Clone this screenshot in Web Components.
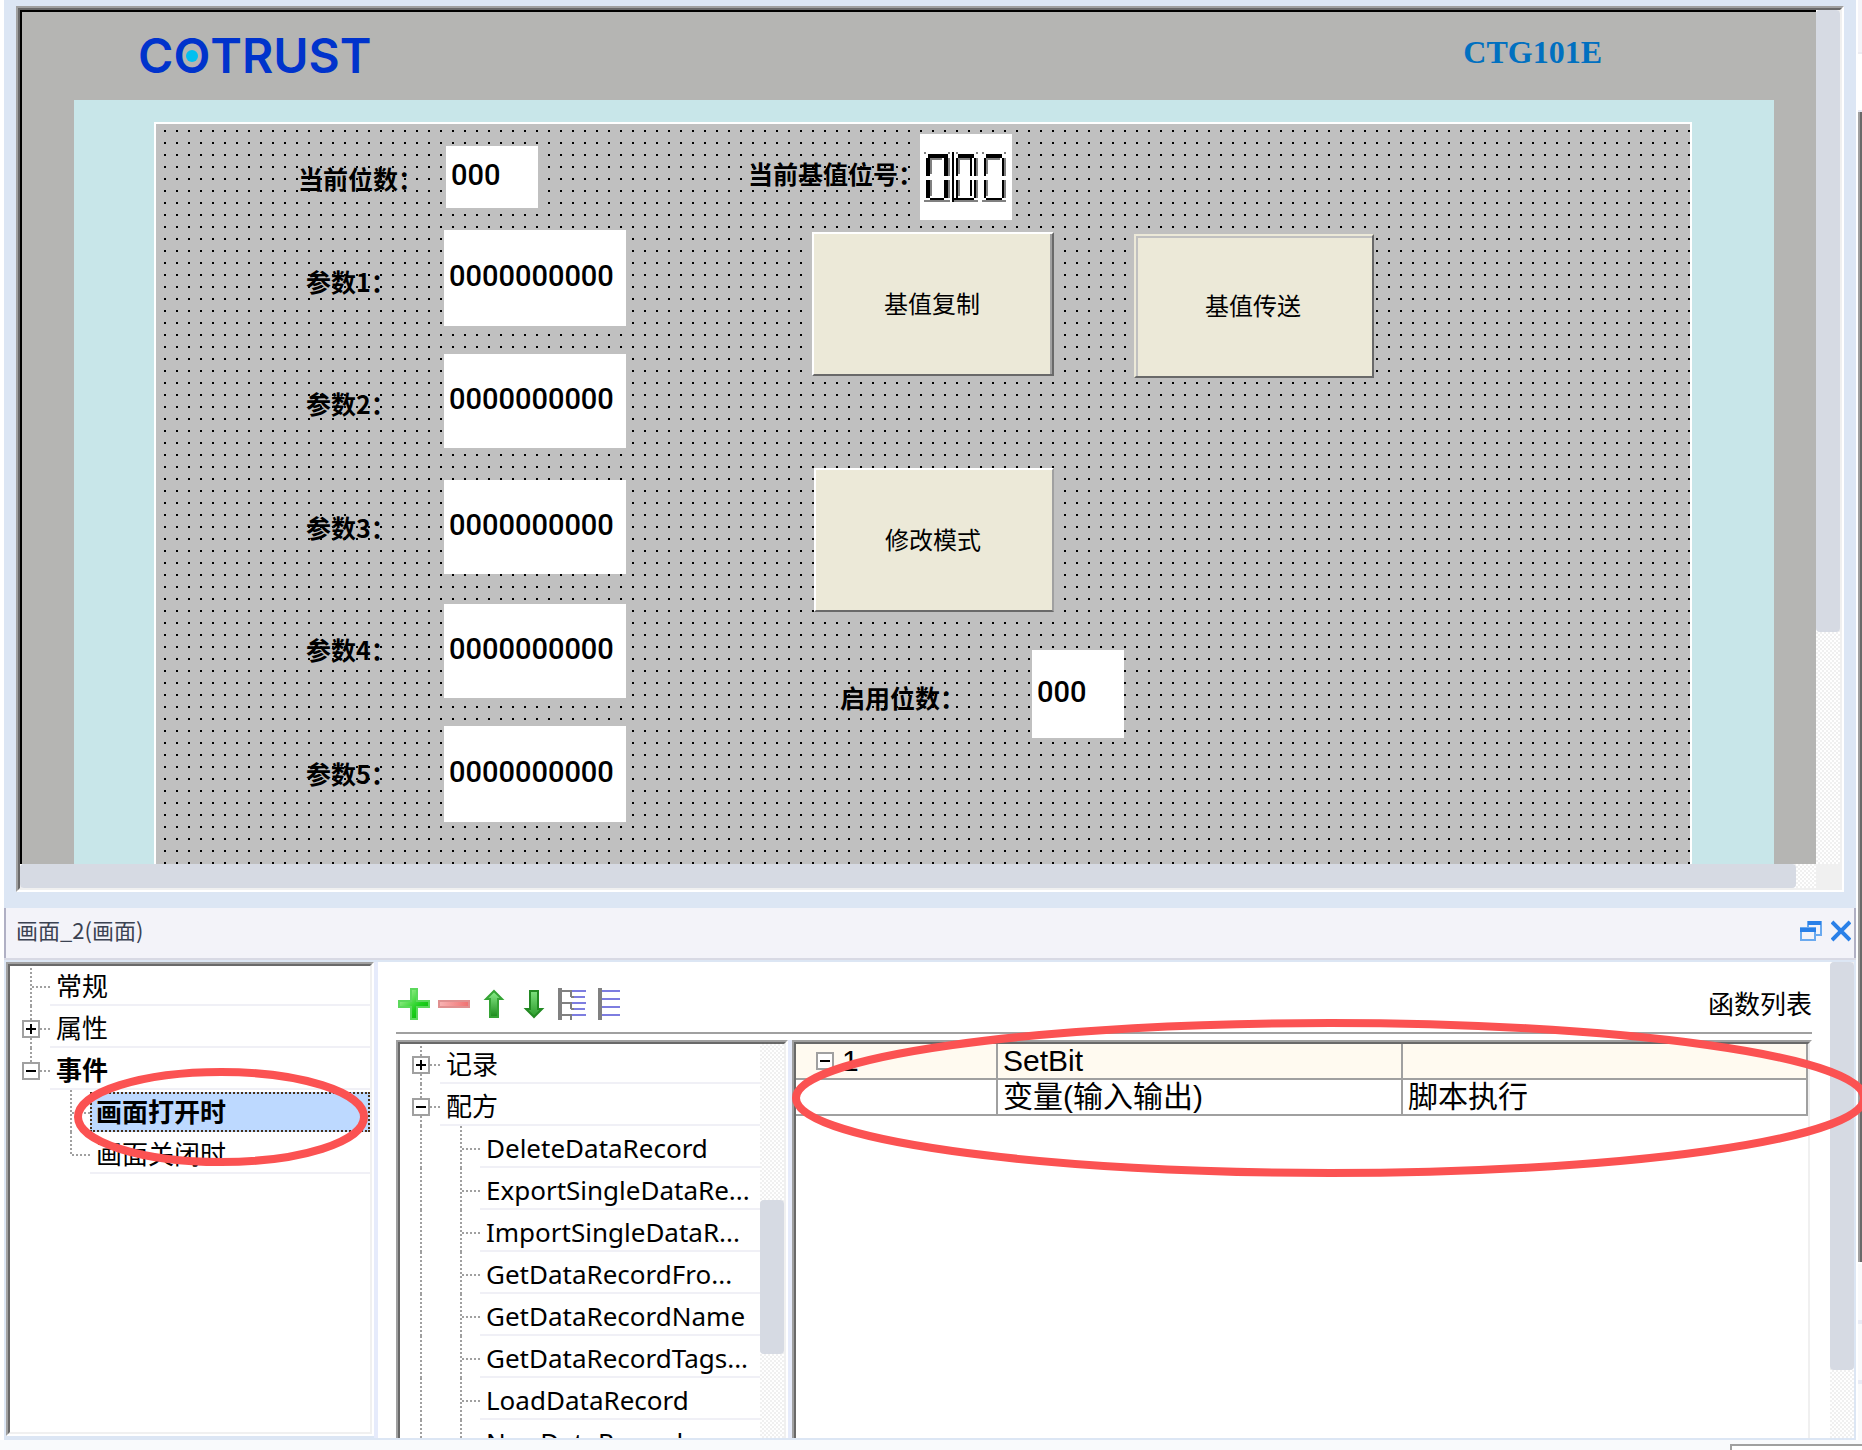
<!DOCTYPE html>
<html lang="zh-CN">
<head>
<meta charset="utf-8">
<title>画面_2(画面)</title>
<style>
html, body { margin: 0; background: #fff; }
body { font-family: "Noto Sans", "Noto Sans CJK SC", sans-serif; color: #000; overflow: hidden; }
</style>
</head>
<body>
<config-app></config-app>
<script>
const define = (name, html, setup) => customElements.define(name, class extends HTMLElement {
  connectedCallback() {
    if (this.shadowRoot) return;
    this.attachShadow({ mode: 'open' }).innerHTML = typeof html === 'function' ? html(this) : html;
    if (setup) setup(this);
  }
});

/* Scroll bar: checkered track with a rounded thumb; thumb length and offset come from attributes */
define('scroll-bar', el => {
  const v = !el.hasAttribute('horizontal');
  const start = el.getAttribute('start') || '0px', end = el.getAttribute('end') || '0px';
  return `<style>
    :host { display: flex; flex-direction: ${v ? 'column' : 'row'}; box-sizing: border-box;
      ${v ? 'width: 24px' : 'height: 24px'}; padding: ${v ? `${start} 0 ${end}` : `0 ${end} 0 ${start}`};
      background: conic-gradient(#f0f0f0 25%, #fff 0 50%, #f0f0f0 0 75%, #fff 0) 0 0 / 4px 4px; }
    .thumb { flex: 1; background: #d6dae3; border-radius: 4px; }
  </style><div class="thumb"></div>`;
});

/* Sunken two-tone frame */
define('sunken-frame', `<style>
    :host { display: flex; min-width: 0; min-height: 0; border: 2px solid; border-color: #a0a0a0 #fff #fff #a0a0a0; }
    :host([open-bottom]), :host([open-bottom]) .inner { border-bottom: 0; }
    .inner { flex: 1; min-width: 0; display: flex; border: 2px solid; border-color: #696969 #f0f0f0 #f0f0f0 #696969; background: #fff; overflow: hidden; }
    ::slotted(*) { flex: 1; min-width: 0; }
    ::slotted(scroll-bar) { flex: none; }
  </style><div class="inner"><slot></slot></div>`);

define('brand-logo', `<style>
    :host { display: block; font: 600 48px/52px Inter, sans-serif; color: #0033cc; }
    .o { position: relative; }
    .o::after { content: ""; position: absolute; left: 50%; top: 50%; width: 12px; height: 12px; margin: -6px 0 0 -6px; border-radius: 50%; background: #00c0f0; }
  </style>C<span class="o">O</span>TRUST`);

/* Three digit segment indicator */
define('segment-display', `<style>
    :host { display: flex; align-items: center; justify-content: center; background: #fff; }
    svg { display: block; }
  </style><svg width="84" height="50" viewBox="0 0 84 50" role="img" aria-label="000" shape-rendering="crispEdges">
    <g fill="#808080">
      <path d="M0 0h2v2h-2zM24 0h2v2h-2zM6 6h12v2h-10v14h-2zM24 6h2v18h-2zM6 28h2v16h-2zM24 28h2v18h-2zM0 48h26v2h-26z"/>
      <path d="M32 0h2v2h-2zM52 0h2v2h-2zM34 6h12v2h-10v14h-2zM52 6h2v18h-2zM34 28h2v16h-2zM52 28h2v18h-2zM30 48h24v2h-24z"/>
      <path d="M58 0h2v2h-2zM80 0h2v2h-2zM62 6h14v2h-12v14h-2zM80 6h2v18h-2zM62 28h2v16h-2zM80 28h2v18h-2zM58 48h24v2h-24z"/>
    </g>
    <path d="M4 2h20v22h-4v-18h-14v18h-4v-18h2zM2 28h4v18h-4zM20 28h4v18h-4zM6 46h14v2h-14z"/>
    <path d="M28 0h2v50h-2zM34 2h16v4h-16zM32 6h2v18h-2zM46 6h2v18h-2zM50 6h2v18h-2zM32 28h2v18h-2zM46 28h2v16h-2zM50 28h2v18h-2zM30 46h20v2h-20z"/>
    <path d="M62 2h16v4h-16zM60 6h2v18h-2zM78 6h2v18h-2zM60 28h2v18h-2zM78 28h2v18h-2zM62 46h16v2h-16z"/>
  </svg>`);

/* Design surface: freely placed labels, fields and buttons */
define('hmi-screen', () => {
  const fields = [
    ['当前位数：', 142, 42, '000', 290, 22, 92, 62],
    ['参数1：', 150, 145, '0000000000', 288, 106, 182, 96],
    ['参数2：', 150, 267, '0000000000', 288, 230, 182, 94],
    ['参数3：', 150, 391, '0000000000', 288, 356, 182, 94],
    ['参数4：', 150, 513, '0000000000', 288, 480, 182, 94],
    ['参数5：', 150, 637, '0000000000', 288, 602, 182, 96],
    ['启用位数：', 684, 561, '000', 876, 526, 92, 88]
  ];
  const buttons = [
    ['基值复制', 656, 108, 242, 144, 'raised'],
    ['基值传送', 978, 110, 240, 144, 'flat'],
    ['修改模式', 658, 344, 240, 144, 'soft']
  ];
  return `<style>
    :host { display: block; position: relative; border: 2px solid #fff; border-bottom: 0; overflow: hidden;
      background: conic-gradient(from 270deg at 2px 2px, #000 90deg, transparent 0) 8px 6px / 12px 12px #c0c0c0; }
    label, .caption, input, button, segment-display { position: absolute; box-sizing: border-box; margin: 0; }
    label, .caption { font: bold 25px/24px "Noto Sans CJK SC", sans-serif; white-space: nowrap; }
    input { border: 0; border-radius: 0; padding: 0 0 4px 5px; background: #fff; color: #000; font: 500 29px/32px Roboto, sans-serif; outline: 0; }
    button { padding: 0 2px 2px 0; border: 2px solid; border-radius: 0; background: #ece9d8; color: #000; font: 24px/28px "Noto Sans CJK SC", sans-serif; }
    .raised { border-color: #fff #696969 #696969 #fff; box-shadow: inset -2px 0 #a0a0a0; }
    .flat { border-color: #ece9d8 #696969 #696969 #ece9d8; box-shadow: inset 2px 2px #c0c0c0; }
    .soft { border-color: #fff #a0a0a0 #696969 #fff; }
  </style>
  ${fields.map(([t, x, y, v, bx, by, w, h], i) => `
    <label for="f${i}" style="left:${x}px;top:${y}px">${t}</label>
    <input id="f${i}" value="${v}" style="left:${bx}px;top:${by}px;width:${w}px;height:${h}px">`).join('')}
  <span class="caption" style="left:592px;top:37px">当前基值位号：</span>
  <segment-display style="left:764px;top:10px;width:92px;height:86px"></segment-display>
  ${buttons.map(([t, x, y, w, h, c]) => `<button class="${c}" style="left:${x}px;top:${y}px;width:${w}px;height:${h}px">${t}</button>`).join('')}`;
});

define('device-view', `<style>
    :host { display: grid; grid-template-columns: minmax(0, 1fr) 24px; grid-template-rows: 854px 24px; background: #f0f0f0; }
    .device { display: flex; flex-direction: column; border: solid #000; border-width: 2px 0 0 2px; background: #b5b5b3; }
    header { display: flex; justify-content: space-between; align-items: center; height: 88px; box-sizing: border-box; padding: 0 214px 0 116px; }
    .model { padding-bottom: 8px; font: bold 32px/36px "Liberation Serif", serif; color: #0070c0; }
    .bezel { flex: 1; display: flex; margin: 0 42px 0 52px; padding: 22px 82px 0 80px; background: #c8e6e9; }
    hmi-screen { flex: 1; }
  </style>
  <div class="device">
    <header><brand-logo></brand-logo><span class="model">CTG101E</span></header>
    <div class="bezel"><hmi-screen></hmi-screen></div>
  </div>
  <scroll-bar end="232px"></scroll-bar>
  <scroll-bar horizontal end="20px"></scroll-bar>`);

/* Tree rows: one 40px guide cell per level, then the caption */
const guide = kind => {
  const v = (a, b) => `<path d="M21 ${a}V${b}" stroke="#a0a0a0" stroke-width="2" stroke-dasharray="2"/>`;
  const h = `<path d="M22 23H40" stroke="#a0a0a0" stroke-width="2" stroke-dasharray="2"/>`;
  const box = s => `<path d="M13 15h16v16h-16z" fill="#fff" stroke="#a0a0a0" stroke-width="2"/><path d="M16 23h10${s === '+' ? 'M21 18v10' : ''}" stroke="#000" stroke-width="2"/>`;
  const art = {
    none: '', pass: v(0, 42), first: v(4, 42) + h, mid: v(0, 42) + h, end: v(0, 24) + h,
    plus: v(0, 42) + h + box('+'), minus: v(0, 42) + h + box('-'), minusEnd: v(0, 14) + h + box('-')
  }[kind];
  return `<svg width="40" height="42" viewBox="0 0 40 42" fill="none" shape-rendering="crispEdges" aria-hidden="true">${art}</svg>`;
};
define('tree-row', el => `<style>
    :host { display: flex; height: 42px; }
    svg { flex: none; display: block; }
    .text { flex: 1; min-width: 0; box-sizing: border-box; padding: 4px 0 0 6px; border-bottom: 2px solid #f0f0f6;
      font-size: 26px; line-height: 36px; white-space: nowrap; overflow: hidden; }
    :host([strong]) .text, :host([selected]) .text { font-weight: bold; }
    :host([selected]) .text { margin-top: 2px; padding: 0 0 0 4px; border: 2px dotted #4a3218; background: #bdd9ff; }
  </style>${el.getAttribute('guides').split(' ').map(guide).join('')}<div class="text"><slot></slot></div>`,
  el => el.setAttribute('role', 'treeitem'));
define('tree-list', `<style>
    :host { display: block; margin-top: -2px; height: 0; min-height: 100%; }
  </style><slot></slot>`, el => el.setAttribute('role', 'tree'));

define('tool-bar', `<style>
    :host { display: flex; align-items: center; gap: 8px; height: 70px; padding: 0 0 0 2px; border-bottom: 2px solid #a0a0a0; }
    button, .title { margin-top: 14px; }
    button { width: 32px; height: 32px; padding: 0; border: 0; background: none; }
    svg { display: block; }
    .title { margin-left: auto; font-size: 26px; line-height: 32px; }
  </style>
  <svg width="0" height="0" style="position:absolute" aria-hidden="true"><defs>
    <linearGradient id="g" x1="0" y1="0" x2="1" y2="1"><stop offset="0" stop-color="#c8f8b8"/><stop offset=".6" stop-color="#1fd01f"/><stop offset="1" stop-color="#00b000"/></linearGradient>
    <linearGradient id="a" x1="0" y1="0" x2="0" y2="1"><stop offset="0" stop-color="#8cf08c"/><stop offset="1" stop-color="#1c8a1c"/></linearGradient>
    <linearGradient id="b" x1="0" y1="0" x2="0" y2="1"><stop offset="0" stop-color="#7ee07e"/><stop offset="1" stop-color="#2a9a2a"/></linearGradient>
    <linearGradient id="r" x1="0" y1="0" x2="1" y2="0"><stop offset="0" stop-color="#f8b4b4"/><stop offset="1" stop-color="#f07070"/></linearGradient>
  </defs></svg>
  <button aria-label="添加"><svg width="32" height="32"><path d="M13 1h6v12h12v6h-12v12h-6v-12h-12v-6h12z" fill="url(#g)" stroke="#5cd85c" stroke-width="2"/></svg></button>
  <button aria-label="删除"><svg width="32" height="32"><path d="M1 13h30v6h-30z" fill="url(#r)" stroke="#e09090" stroke-width="2"/></svg></button>
  <button aria-label="上移"><svg width="32" height="32"><path d="M16 3l8 8h-4v18h-8v-18h-4z" fill="url(#a)" stroke="#35a435" stroke-width="2"/></svg></button>
  <button aria-label="下移"><svg width="32" height="32"><path d="M12 3h8v18h4l-8 8l-8-8h4z" fill="url(#b)" stroke="#238a23" stroke-width="2"/></svg></button>
  <button aria-label="展开"><svg width="32" height="32" fill="none" shape-rendering="crispEdges"><path d="M2 0v32" stroke="#808080" stroke-width="4"/><path d="M4 3h10M4 15h10M4 27h10M13 3v6M13 15v6M13 27v5M13 9h4M13 21h4" stroke="#808080" stroke-width="2"/><path d="M14 3h14M16 9h11M14 15h14M16 21h11M14 27h14" stroke="#7d7de0" stroke-width="2"/></svg></button>
  <button aria-label="折叠"><svg width="32" height="32" fill="none" shape-rendering="crispEdges"><path d="M2 0v32" stroke="#808080" stroke-width="4"/><path d="M4 3h18M4 11h18M4 19h18M4 27h18" stroke="#7d7de0" stroke-width="2"/></svg></button>
  <span class="title"><slot></slot></span>`);

define('function-table', `<style>
    :host { display: block; }
    table { width: 100%; border-collapse: separate; border-spacing: 0; table-layout: fixed; }
    col.no { width: 202px; }
    td { box-sizing: border-box; height: 36px; padding: 0 0 0 5px; border: solid #a0a0a0; border-width: 0 2px 2px 0;
      font: 30px/34px "Liberation Sans", "Noto Sans CJK SC", sans-serif; white-space: nowrap; }
    tr:first-child td { background: #fffaf0; }
    .id { display: flex; align-items: center; gap: 8px; height: 34px; padding-left: 15px; }
    svg { display: block; }
  </style>
  <table><colgroup><col class="no"><col><col></colgroup>
    <tr><td><div class="id"><svg width="18" height="18" shape-rendering="crispEdges"><path d="M1 1h16v16h-16z" fill="#fff" stroke="#a0a0a0" stroke-width="2"/><path d="M4 9h10" stroke="#000" stroke-width="2"/></svg>1</div></td><td>SetBit</td><td></td></tr>
    <tr><td></td><td>变量(输入输出)</td><td>脚本执行</td></tr>
  </table>`);

define('property-panel', `<style>
    :host { display: flex; flex-direction: column; height: 532px; box-sizing: border-box; border-bottom: 2px solid #dce6f4; position: relative; }
    header { display: flex; align-items: center; gap: 8px; height: 42px; padding: 0 3px 8px 10px; background: #f3f3f9;
      border: solid #b0b0c4; border-width: 0 2px; box-shadow: 0 2px #d8d9e4; margin-bottom: 4px; }
    h2 { flex: 1; margin: 0; font: 22px/30px "Noto Sans CJK SC", sans-serif; color: #3b4252; }
    button { padding: 4px 0 0; border: 0; background: none; }
    svg { display: block; }
    .body { flex: 1; min-height: 0; display: flex; padding: 0 2px; }
    .nav { width: 368px; box-sizing: border-box; margin-bottom: 2px; }
    .split { width: 4px; background: #e6ebfb; }
    .work { flex: 1; min-width: 0; display: flex; flex-direction: column; padding: 0 18px; background: #fff; }
    .panes { flex: 1; min-height: 0; display: flex; margin-top: 6px; }
    .functions { width: 392px; box-sizing: border-box; }
    .grid { flex: 1; }
    .mark { position: absolute; left: 0; top: 0; overflow: visible; pointer-events: none; }
  </style>
  <header><h2>画面_2(画面)</h2>
    <button aria-label="还原"><svg width="24" height="22" fill="none" stroke="#6aa9ef" stroke-width="2"><path d="M9 7V2h13v13h-5"/><path d="M9 3h13" stroke="#2a80e8" stroke-width="4"/><path d="M2 8h14v12h-14z" fill="#f3f3f9"/><path d="M1 10h16" stroke="#2a80e8" stroke-width="4"/></svg></button>
    <button aria-label="关闭"><svg width="20" height="22" fill="none" stroke="#2a80e8" stroke-width="4"><path d="M1 2l18 18M19 2L1 20"/></svg></button>
  </header>
  <div class="body">
    <sunken-frame class="nav"><tree-list>
      <tree-row guides="first">常规</tree-row>
      <tree-row guides="plus">属性</tree-row>
      <tree-row guides="minusEnd" strong>事件</tree-row>
      <tree-row guides="none mid" selected>画面打开时</tree-row>
      <tree-row guides="none end">画面关闭时</tree-row>
    </tree-list></sunken-frame>
    <div class="split"></div>
    <div class="work">
      <tool-bar>函数列表</tool-bar>
      <div class="panes">
        <sunken-frame class="functions" open-bottom><tree-list>
          <tree-row guides="plus">记录</tree-row>
          <tree-row guides="minus">配方</tree-row>
          <tree-row guides="pass mid">DeleteDataRecord</tree-row>
          <tree-row guides="pass mid">ExportSingleDataRe...</tree-row>
          <tree-row guides="pass mid">ImportSingleDataR...</tree-row>
          <tree-row guides="pass mid">GetDataRecordFro...</tree-row>
          <tree-row guides="pass mid">GetDataRecordName</tree-row>
          <tree-row guides="pass mid">GetDataRecordTags...</tree-row>
          <tree-row guides="pass mid">LoadDataRecord</tree-row>
          <tree-row guides="pass mid">NewDataRecord</tree-row>
        </tree-list><scroll-bar start="156px" end="84px"></scroll-bar></sunken-frame>
        <div class="split"></div>
        <sunken-frame class="grid" open-bottom><function-table></function-table></sunken-frame>
      </div>
    </div>
    <scroll-bar end="68px"></scroll-bar>
  </div>
  <svg class="mark" width="100%" height="100%" fill="none" stroke="#fb5252" stroke-width="8" aria-hidden="true">
    <ellipse cx="217" cy="209" rx="143" ry="45"/><ellipse cx="1326" cy="190" rx="534" ry="75"/>
  </svg>`);

define('config-app', `<style>
    :host { display: grid; grid-template-columns: 4px minmax(0, 1fr) 2px 4px; overflow: hidden; }
    main { background: #dce6f4; }
    .editor { display: flex; padding: 6px 12px 16px; }
    .edge { grid-column: 4; display: flex; flex-direction: column; background: #f9fafc; }
    .edge .cap { height: 52px; background: #f4f4f9; border-bottom: 2px solid #ececf2; }
    .edge .gap { height: 56px; background: #fff; border-bottom: 2px solid #e8eaf4; }
    .edge .side { height: 1150px; background: linear-gradient(90deg, #a0a0a0 50%, #696969 0); border-bottom: 2px solid #fff; }
    .edge .line { height: 56px; border-bottom: 4px solid #e8ebf5; }
    footer { grid-column: 1 / -1; height: 10px; box-sizing: border-box; padding-top: 4px; background: #f9fafc; display: flex; justify-content: flex-end; }
    footer div { width: 130px; border: solid #a0a0a0; border-width: 2px 0 0 2px; background: #fff; }
  </style>
  <span></span>
  <main>
    <div class="editor"><sunken-frame style="flex:1"><device-view></device-view></sunken-frame></div>
    <property-panel></property-panel>
  </main>
  <div class="edge"><div class="cap"></div><div class="gap"></div><div class="side"></div><div class="line"></div><div class="line"></div></div>
  <footer><div></div></footer>`);
</script>
</body>
</html>
